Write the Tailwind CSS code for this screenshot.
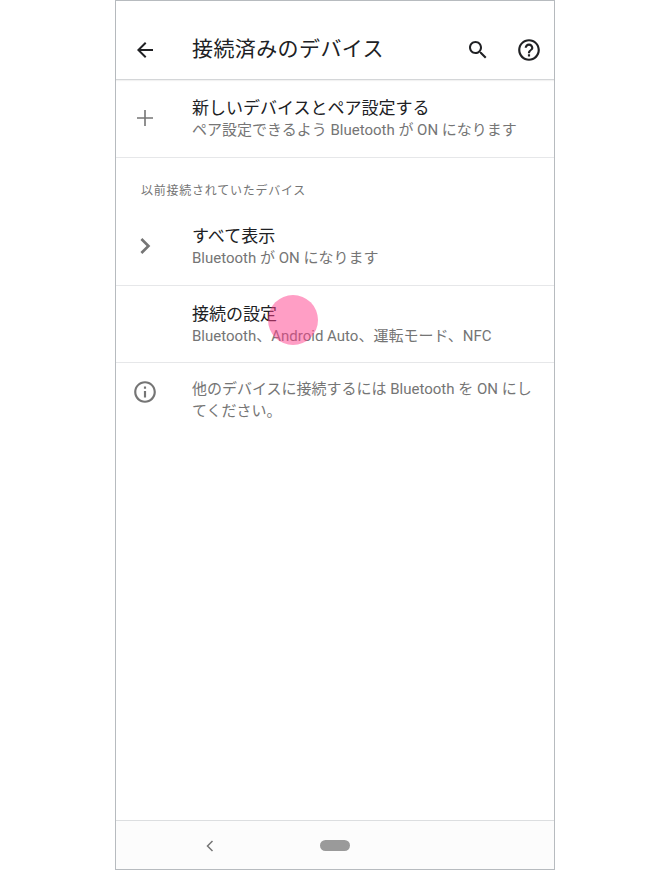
<!DOCTYPE html>
<html lang="ja">
<head>
  <meta charset="UTF-8" />
  <title>接続済みのデバイス</title>
  <script src="https://cdn.jsdelivr.net/npm/@tailwindcss/browser@4"></script>
</head>
<body class="bg-white font-['Roboto','Noto_Sans_CJK_JP',sans-serif]">
  <div class="relative mx-auto flex h-[870px] w-[440px] flex-col border border-[#b7bbbf] bg-white">
    <!-- App bar -->
    <header class="flex h-[79px] shrink-0 items-center border-b border-[#d4d6d8] pt-[19px] shadow-[0_1px_1px_rgba(0,0,0,0.05)]">
      <div class="flex w-[58px] justify-center">
        <svg class="h-6 w-6" viewBox="0 0 24 24" fill="#202124"><path d="M20 11H7.83l5.59-5.59L12 4l-8 8 8 8 1.41-1.41L7.83 13H20v-2z"/></svg>
      </div>
      <div class="ml-[18px] flex-1 text-[21px] tracking-[0.4px] text-[#202124]">接続済みのデバイス</div>
      <svg class="mr-[26px] h-6 w-6" viewBox="0 0 24 24" fill="#202124"><path d="M15.5 14h-.79l-.28-.27C15.41 12.59 16 11.11 16 9.5 16 5.91 13.09 3 9.5 3S3 5.91 3 9.5 5.91 16 9.5 16c1.61 0 3.09-.59 4.23-1.57l.27.28v.79l5 4.99L20.49 19l-4.99-5zm-6 0C7.01 14 5 11.99 5 9.5S7.01 5 9.5 5 14 7.01 14 9.5 11.99 14 9.5 14z"/></svg>
      <svg class="mr-[12px] h-[26px] w-[26px]" viewBox="0 0 24 24" fill="#202124"><path d="M11 18h2v-2h-2v2zm1-16C6.48 2 2 6.48 2 12s4.48 10 10 10 10-4.48 10-10S17.52 2 12 2zm0 18c-4.41 0-8-3.59-8-8s3.59-8 8-8 8 3.59 8 8-3.59 8-8 8zm0-14c-2.21 0-4 1.79-4 4h2c0-1.1.9-2 2-2s2 .9 2 2c0 2-3 1.75-3 5h2c0-2.25 3-2.5 3-5 0-2.21-1.79-4-4-4z"/></svg>
    </header>

    <!-- Pair new device -->
    <section class="flex h-[78px] shrink-0 items-center border-b border-[#e6e7e9]">
      <div class="-mt-px flex w-[58px] justify-center">
        <svg class="h-6 w-6" viewBox="0 0 24 24" fill="#757575"><path d="M20 12.8h-7.2V20h-1.6v-7.2H4v-1.6h7.2V4h1.6v7.2H20z"/></svg>
      </div>
      <div class="ml-[18px]">
        <div class="text-[17px] leading-[22px] text-[#202124]">新しいデバイスとペア設定する</div>
        <div class="text-[15px] leading-[22px] text-[#757575]">ペア設定できるよう Bluetooth が ON になります</div>
      </div>
    </section>

    <!-- Previously connected -->
    <div class="flex h-[50px] shrink-0 items-end pl-[25px] pb-[8px] text-[12px] tracking-[0.75px] text-[#757575]">以前接続されていたデバイス</div>
    <section class="flex h-[78px] shrink-0 items-center border-b border-[#e6e7e9]">
      <div class="-mt-px flex w-[58px] justify-center">
        <svg class="h-8 w-8" viewBox="0 0 24 24" fill="#757575"><path d="M10 6 8.59 7.41 13.17 12l-4.58 4.59L10 18l6-6z"/></svg>
      </div>
      <div class="ml-[18px]">
        <div class="text-[17px] leading-[22px] text-[#202124]">すべて表示</div>
        <div class="text-[15px] leading-[22px] text-[#757575]">Bluetooth が ON になります</div>
      </div>
    </section>

    <!-- Connection preferences -->
    <section class="flex h-[77px] shrink-0 items-center border-b border-[#e6e7e9] pl-[76px] pt-[2px]">
      <div>
        <div class="text-[17px] leading-[22px] text-[#202124]">接続の設定</div>
        <div class="text-[15px] leading-[22px] text-[#757575]">Bluetooth、Android Auto、運転モード、NFC</div>
      </div>
    </section>

    <!-- Info footer -->
    <section class="flex shrink-0 pt-[16px]">
      <div class="flex w-[58px] justify-center">
        <svg class="h-[26px] w-[26px]" viewBox="0 0 24 24" fill="#757575"><path d="M11 7h2v2h-2zm0 4h2v6h-2zm1-9C6.48 2 2 6.48 2 12s4.48 10 10 10 10-4.48 10-10S17.52 2 12 2zm0 18c-4.41 0-8-3.59-8-8s3.59-8 8-8 8 3.59 8 8-3.59 8-8 8z"/></svg>
      </div>
      <div class="-mt-px ml-[18px] w-[345px] text-[15px] leading-[22px] text-[#757575]">他のデバイスに接続するには Bluetooth を ON にしてください。</div>
    </section>

    <div class="flex-1"></div>

    <!-- Nav bar -->
    <nav class="relative h-[49px] shrink-0 border-t border-[#dcdee0] bg-[#fcfcfc]">
      <svg class="absolute left-[88px] top-[19px] h-3 w-3" viewBox="0 0 12 12" fill="none" stroke="#757575" stroke-width="1.5"><path d="M8.5 1 3.5 6 8.5 11"/></svg>
      <div class="absolute left-[204px] top-[19px] h-[11px] w-[30px] rounded-full bg-[#9a9a9a]"></div>
    </nav>

    <!-- Touch indicator -->
    <div class="absolute left-[152px] top-[294px] h-[50px] w-[50px] rounded-full bg-[#ff3d8b]/50"></div>
  </div>
</body>
</html>
